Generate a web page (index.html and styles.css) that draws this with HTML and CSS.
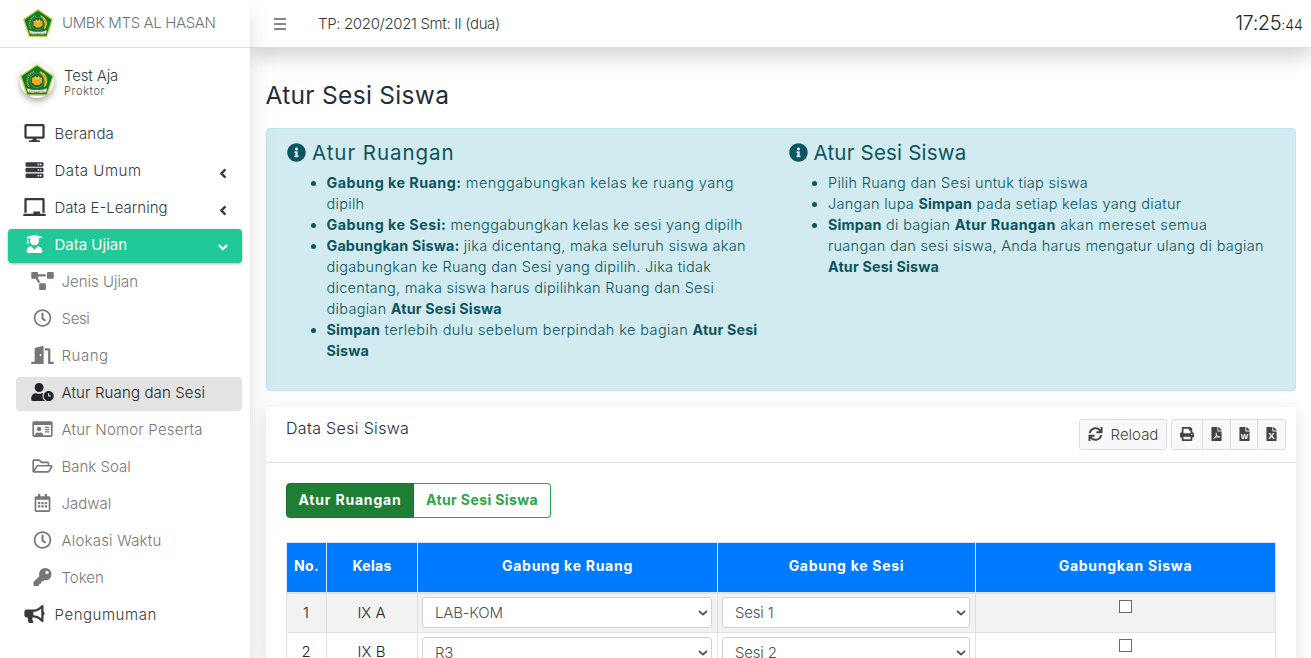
FILE: index.html
```
<!DOCTYPE html>
<html lang="id">
<head>
<meta charset="utf-8">
<title>Atur Sesi Siswa</title>
<link rel="stylesheet" href="styles.css">
</head>
<body>
<svg class="defs" aria-hidden="true">
  <symbol id="logo" viewBox="0 0 60 56">
    <path d="M30 1.500L58.500 21 47.500 54.500H12.500L1.500 21z" fill="#0b7a30" stroke="#c9cf3c" stroke-width="2.500" stroke-linejoin="round"/>
    <path d="M25 13.500a17 17 0 0 0-9 26" fill="none" stroke="#b9b93a" stroke-width="3.500" stroke-dasharray="1.800 1.600"/>
    <path d="M35 13.500a16 16 0 0 1 8 26q5-14-8-26z" fill="#dfb52e" stroke="#dfb52e" stroke-width="2"/>
    <circle cx="30" cy="29" r="12.500" fill="#0d6d30" stroke="#7fa63a" stroke-width="1"/>
    <path d="M21 24q5-2 9 1 4-3 9-1v9q-3 1-5 4h-8q-2-3-5-4z" fill="#f0a928"/>
    <path d="M26 20l4 4 4-4v5l-4 3-4-3z" fill="#f6d24a"/>
    <path d="M12 42q9 5 18 3 9 2 18-3l-1.500 7q-8 3-16.500 1-8.500 2-16.500-1z" fill="#f4f5ea" stroke="#5a6b50" stroke-width=".8"/>
    <path d="M16 47.500q7 2 14 .5 7 1.500 14-.5" fill="none" stroke="#68755f" stroke-width="1.500" stroke-dasharray="2 1"/>
  </symbol>
  <symbol id="desktop" viewBox="0 0 576 512"><path d="M528 0H48C21.500 0 0 21.500 0 48v320c0 26.500 21.500 48 48 48h192l-16 48h-72c-13.300 0-24 10.700-24 24s10.700 24 24 24h272c13.300 0 24-10.700 24-24s-10.700-24-24-24h-72l-16-48h192c26.500 0 48-21.500 48-48V48c0-26.500-21.500-48-48-48zm-16 352H64V64h448v288z"/></symbol>
  <symbol id="server" viewBox="0 0 512 512"><path fill-rule="evenodd" d="M480 160H32c-17.700 0-32-14.300-32-32V64c0-17.700 14.300-32 32-32h448c17.700 0 32 14.300 32 32v64c0 17.700-14.300 32-32 32zm-48-88a24 24 0 1 0 0 48 24 24 0 0 0 0-48zm-64 0a24 24 0 1 0 0 48 24 24 0 0 0 0-48zm112 248H32c-17.700 0-32-14.300-32-32v-64c0-17.700 14.300-32 32-32h448c17.700 0 32 14.300 32 32v64c0 17.700-14.300 32-32 32zm-48-88a24 24 0 1 0 0 48 24 24 0 0 0 0-48zm-64 0a24 24 0 1 0 0 48 24 24 0 0 0 0-48zm112 248H32c-17.700 0-32-14.300-32-32v-64c0-17.700 14.300-32 32-32h448c17.700 0 32 14.300 32 32v64c0 17.700-14.300 32-32 32zm-48-88a24 24 0 1 0 0 48 24 24 0 0 0 0-48zm-64 0a24 24 0 1 0 0 48 24 24 0 0 0 0-48z"/></symbol>
  <symbol id="chalkboard" viewBox="0 0 640 512"><path d="M96 64h448v352h64V40c0-22.060-17.940-40-40-40H72C49.940 0 32 17.940 32 40v376h64V64zm528 384H480v-64H288v64H16c-8.840 0-16 7.160-16 16v32c0 8.840 7.160 16 16 16h608c8.840 0 16-7.160 16-16v-32c0-8.840-7.160-16-16-16z"/></symbol>
  <symbol id="graduate" viewBox="0 0 448 512"><path d="M319.4 320.6L224 416l-95.4-95.4C57.1 323.7 0 382.2 0 454.4v9.6c0 26.500 21.500 48 48 48h352c26.500 0 48-21.500 48-48v-9.600c0-72.200-57.100-130.700-128.600-133.800zM13.6 79.800l6.400 1.500v58.400c-7 4.200-12 11.500-12 20.300 0 8.400 4.600 15.400 11.100 19.700L3.500 242c-1.700 6.900 2.100 14 7.600 14h41.800c5.500 0 9.300-7.100 7.600-14l-15.600-62.300C51.4 175.400 56 168.400 56 160c0-8.800-5-16.100-12-20.300V87.100l66 15.900c-8.600 17.200-14 36.400-14 57 0 70.700 57.300 128 128 128s128-57.300 128-128c0-20.600-5.300-39.800-14-57l96.300-23.200c18.200-4.400 18.200-27.100 0-31.500l-190.400-46c-13-3.100-26.700-3.100-39.700 0L13.600 48.200c-18.100 4.400-18.100 27.200 0 31.600z"/></symbol>
  <symbol id="diagram" viewBox="0 0 640 512"><path d="M384 320H256c-17.670 0-32 14.330-32 32v128c0 17.670 14.330 32 32 32h128c17.670 0 32-14.330 32-32V352c0-17.670-14.330-32-32-32zM192 32c0-17.670-14.330-32-32-32H32C14.330 0 0 14.330 0 32v128c0 17.670 14.330 32 32 32h95.720l73.160 128.040C211.980 300.980 232.400 288 256 288h.28L192 175.510V128h224V64H192V32zM608 0H480c-17.670 0-32 14.330-32 32v128c0 17.670 14.330 32 32 32h128c17.670 0 32-14.330 32-32V32c0-17.670-14.330-32-32-32z"/></symbol>
  <symbol id="clock" viewBox="0 0 512 512"><path d="M256 8C119 8 8 119 8 256s111 248 248 248 248-111 248-248S393 8 256 8zm0 448c-110.500 0-200-89.500-200-200S145.500 56 256 56s200 89.500 200 200-89.500 200-200 200zm61.800-104.400l-84.900-61.700c-3.100-2.300-4.900-5.900-4.900-9.700V116c0-6.600 5.400-12 12-12h32c6.600 0 12 5.400 12 12v141.700l66.800 48.600c5.400 3.900 6.500 11.400 2.600 16.800L334.600 349c-3.900 5.300-11.400 6.500-16.800 2.600z"/></symbol>
  <symbol id="door" viewBox="0 0 640 512"><path d="M624 448h-80V113.450C544 86.190 522.470 64 496 64H384v64h96v384h144c8.840 0 16-7.160 16-16v-32c0-8.840-7.160-16-16-16zM312.240 1.010l-192 49.740C105.990 54.440 96 67.700 96 82.920V448H16c-8.840 0-16 7.160-16 16v32c0 8.840 7.160 16 16 16h336V33.180c0-21.580-19.560-37.410-39.760-32.170zM264 288c-13.250 0-24-14.330-24-32s10.750-32 24-32 24 14.330 24 32-10.750 32-24 32z"/></symbol>
  <symbol id="userclock" viewBox="0 0 640 512"><path d="M496 224c-79.600 0-144 64.400-144 144s64.400 144 144 144 144-64.400 144-144-64.400-144-144-144zm64 150.300c0 5.300-4.400 9.700-9.700 9.700h-60.600c-5.300 0-9.700-4.400-9.700-9.700v-76.600c0-5.300 4.400-9.700 9.700-9.700h12.600c5.300 0 9.700 4.400 9.700 9.700V352h38.300c5.300 0 9.700 4.400 9.700 9.700v12.600zM320 368c0-27.800 6.700-54.100 18.200-77.500-8-1.500-16.200-2.500-24.600-2.500h-16.700c-22.200 10.200-46.900 16-72.900 16s-50.600-5.800-72.900-16h-16.700C60.200 288 0 348.200 0 422.400V464c0 26.500 21.500 48 48 48h347.100c-45.300-31.900-75.100-84.500-75.100-144zm-96-112c70.700 0 128-57.300 128-128S294.700 0 224 0 96 57.300 96 128s57.300 128 128 128z"/></symbol>
  <symbol id="idcard" viewBox="0 0 576 512"><path d="M528 32H48C21.500 32 0 53.500 0 80v352c0 26.500 21.500 48 48 48h480c26.500 0 48-21.500 48-48V80c0-26.500-21.500-48-48-48zm0 400H303.200c.9-4.500.8 3.600.8-22.400 0-31.800-30.100-57.600-67.200-57.600-10.800 0-18.700 8-44.800 8-26.900 0-33.400-8-44.800-8-37.100 0-67.200 25.800-67.200 57.600 0 26-.2 17.900.8 22.400H48V144h480v288zm-168-80h112c4.400 0 8-3.600 8-8v-16c0-4.400-3.600-8-8-8H360c-4.400 0-8 3.600-8 8v16c0 4.400 3.600 8 8 8zm0-64h112c4.400 0 8-3.600 8-8v-16c0-4.400-3.600-8-8-8H360c-4.400 0-8 3.600-8 8v16c0 4.400 3.600 8 8 8zm0-64h112c4.400 0 8-3.600 8-8v-16c0-4.400-3.600-8-8-8H360c-4.400 0-8 3.600-8 8v16c0 4.400 3.600 8 8 8zm-168 96c35.300 0 64-28.700 64-64s-28.700-64-64-64-64 28.700-64 64 28.700 64 64 64z"/></symbol>
  <symbol id="folder" viewBox="0 0 576 512"><path d="M527.9 224H480v-48c0-26.500-21.500-48-48-48H272l-64-64H48C21.500 64 0 85.500 0 112v288c0 26.500 21.500 48 48 48h400c16.500 0 31.900-8.500 40.700-22.600l79.900-128c20-31.900-3-73.400-40.700-73.400zM48 118c0-3.300 2.700-6 6-6h134.100l64 64H426c3.300 0 6 2.700 6 6v42H152c-16.800 0-32.400 8.800-41.100 23.200L48 351.400zm400 282H72l77.200-128H528z"/></symbol>
  <symbol id="calendar" viewBox="0 0 448 512"><path d="M400 64h-48V12c0-6.600-5.400-12-12-12h-40c-6.600 0-12 5.400-12 12v52H160V12c0-6.600-5.400-12-12-12h-40c-6.600 0-12 5.400-12 12v52H48C21.500 64 0 85.500 0 112v352c0 26.500 21.500 48 48 48h352c26.500 0 48-21.500 48-48V112c0-26.500-21.500-48-48-48zm0 394c0 3.300-2.700 6-6 6H54c-3.300 0-6-2.700-6-6V160h352z"/><path d="M96 224h64v64H96zm96 0h64v64h-64zm96 0h64v64h-64zM96 320h64v64H96zm96 0h64v64h-64zm96 0h64v64h-64z"/></symbol>
  <symbol id="key" viewBox="0 0 512 512"><path d="M512 176c0 97.200-78.800 176-176 176-11.220 0-22.190-1.060-32.830-3.070l-24.010 27.010A24 24 0 0 1 261.220 384H224v40c0 13.250-10.750 24-24 24h-40v40c0 13.250-10.750 24-24 24H24c-13.250 0-24-10.750-24-24v-78.060c0-6.360 2.530-12.470 7.030-16.970l161.800-161.800C163.110 213.810 160 195.270 160 176 160 78.800 238.800 0 336 0s176 78.500 176 176zM336 128c0 26.510 21.490 48 48 48s48-21.490 48-48-21.490-48-48-48-48 21.490-48 48z"/></symbol>
  <symbol id="bullhorn" viewBox="0 0 576 512"><path d="M576 240c0-23.630-12.950-44.040-32-55.120V32.010C544 23.260 537.020 0 512 0c-7.120 0-14.190 2.380-19.980 7.020l-85.030 68.030C364.280 109.190 310.660 128 256 128H64c-35.350 0-64 28.650-64 64v96c0 35.350 28.650 64 64 64h33.700c-1.390 10.480-2.180 21.140-2.180 32 0 39.770 9.260 77.350 25.560 110.940 5.190 10.690 16.520 17.060 28.400 17.060h74.280c26.050 0 41.690-29.840 25.900-50.560-16.400-21.520-26.150-48.360-26.150-77.440 0-11.110 1.620-21.790 4.410-32H256c54.660 0 108.280 18.810 150.980 52.950l85.030 68.030a32 32 0 0 0 19.980 7.020c24.920 0 32-22.780 32-32V295.130C563.050 284.040 576 263.630 576 240zm-96 141.420l-33.050-26.440C392.950 311.780 325.120 288 256 288v-96c69.120 0 136.950-23.780 190.950-66.980L480 98.580v282.840z"/></symbol>
  <symbol id="angle" viewBox="0 0 256 512"><path d="M31.700 239l136-136c9.400-9.400 24.600-9.400 33.900 0l22.600 22.600c9.400 9.400 9.400 24.600 0 33.900L127.900 256l96.400 96.400c9.400 9.400 9.400 24.600 0 33.900L201.700 409c-9.400 9.400-24.600 9.400-33.900 0l-136-136c-9.500-9.400-9.500-24.600-.1-34z"/></symbol>
  <symbol id="info" viewBox="0 0 512 512"><path d="M256 8C119.040 8 8 119.080 8 256c0 137 111.040 248 248 248s248-111 248-248C504 119.080 392.960 8 256 8zm0 110c23.200 0 42 18.800 42 42s-18.800 42-42 42-42-18.800-42-42 18.800-42 42-42zm56 254c0 6.630-5.370 12-12 12h-88c-6.630 0-12-5.370-12-12v-24c0-6.630 5.370-12 12-12h12v-64h-12c-6.630 0-12-5.370-12-12v-24c0-6.630 5.370-12 12-12h64c6.630 0 12 5.370 12 12v100h12c6.630 0 12 5.370 12 12v24z"/></symbol>
  <symbol id="sync" viewBox="0 0 512 512"><path d="M440.650 12.570l4 82.770A247.160 247.160 0 0 0 255.830 8C134.730 8 33.910 94.920 12.290 209.820A12 12 0 0 0 24.090 224h49.050a12 12 0 0 0 11.670-9.260 175.910 175.910 0 0 1 317-56.940l-101.460-4.860a12 12 0 0 0-12.570 12v47.410a12 12 0 0 0 12 12H500a12 12 0 0 0 12-12V12a12 12 0 0 0-12-12h-47.370a12 12 0 0 0-11.980 12.570zM255.830 432a175.610 175.610 0 0 1-146-77.800l101.800 4.870a12 12 0 0 0 12.570-12v-47.400a12 12 0 0 0-12-12H12a12 12 0 0 0-12 12V500a12 12 0 0 0 12 12h47.350a12 12 0 0 0 12-12.600l-4.150-82.570A247.170 247.170 0 0 0 255.830 504c121.110 0 221.930-86.920 243.550-201.820a12 12 0 0 0-11.800-14.180h-49.050a12 12 0 0 0-11.670 9.260A175.860 175.860 0 0 1 255.830 432z"/></symbol>
  <symbol id="print" viewBox="0 0 512 512"><path d="M448 192V77.250c0-8.490-3.370-16.620-9.370-22.630L393.370 9.370c-6-6-14.140-9.370-22.630-9.370H96C78.330 0 64 14.330 64 32v160c-35.350 0-64 28.650-64 64v112c0 8.840 7.160 16 16 16h48v96c0 17.670 14.330 32 32 32h320c17.670 0 32-14.330 32-32v-96h48c8.840 0 16-7.160 16-16V256c0-35.350-28.650-64-64-64zm-64 256H128v-96h256v96zm0-224H128V64h192v48c0 8.840 7.160 16 16 16h48v96zm48 72c-13.250 0-24-10.750-24-24 0-13.260 10.750-24 24-24s24 10.740 24 24c0 13.250-10.750 24-24 24z"/></symbol>
  <symbol id="file" viewBox="0 0 384 512"><path d="M224 136V0H24C10.700 0 0 10.700 0 24v464c0 13.300 10.700 24 24 24h336c13.300 0 24-10.700 24-24V160H248c-13.300 0-24-10.700-24-24zM377 105L279.100 7c-4.500-4.500-10.600-7-17-7H256v128h128v-6.100c0-6.300-2.500-12.400-7-16.900z"/></symbol>
  <symbol id="chevron" viewBox="0 0 10 6"><path d="M1 1l4 3.500L9 1" fill="none" stroke="#555" stroke-width="1.700"/></symbol>
</svg>

<div class="app">
  <aside class="sidebar">
    <a class="brand"><svg class="brand-logo"><use href="#logo"/></svg><span>UMBK MTS AL HASAN</span></a>
    <div class="user">
      <span class="avatar"><svg><use href="#logo"/></svg></span>
      <span class="user-text"><span class="user-name">Test Aja</span><span class="user-role">Proktor</span></span>
    </div>
    <nav class="menu">
      <a class="item"><svg><use href="#desktop"/></svg><span class="sp-2">Beranda</span></a>
      <a class="item"><svg><use href="#server"/></svg><span class="sp-5">Data Umum</span><svg class="angle"><use href="#angle"/></svg></a>
      <a class="item"><svg><use href="#chalkboard"/></svg><span>Data E-Learning</span><svg class="angle"><use href="#angle"/></svg></a>
      <a class="item active"><svg><use href="#graduate"/></svg><span>Data Ujian</span><svg class="angle"><use href="#angle"/></svg></a>
      <a class="item sub"><svg><use href="#diagram"/></svg><span>Jenis Ujian</span></a>
      <a class="item sub"><svg><use href="#clock"/></svg><span class="sp-neg">Sesi</span></a>
      <a class="item sub"><svg><use href="#door"/></svg><span class="sp-5">Ruang</span></a>
      <a class="item sub current"><svg><use href="#userclock"/></svg><span class="sp-1">Atur Ruang dan Sesi</span></a>
      <a class="item sub"><svg><use href="#idcard"/></svg><span class="sp-2">Atur Nomor Peserta</span></a>
      <a class="item sub"><svg><use href="#folder"/></svg><span>Bank Soal</span></a>
      <a class="item sub"><svg><use href="#calendar"/></svg><span>Jadwal</span></a>
      <a class="item sub"><svg><use href="#clock"/></svg><span class="sp-2">Alokasi Waktu</span></a>
      <a class="item sub"><svg><use href="#key"/></svg><span>Token</span></a>
      <a class="item"><svg><use href="#bullhorn"/></svg><span class="sp-5">Pengumuman</span></a>
    </nav>
  </aside>

  <div class="main">
    <header class="navbar">
      <span class="bars"><i></i><i></i><i></i></span>
      <span class="period">TP: 2020/2021 Smt: II (dua)</span>
      <span class="time">17:25<small>:44</small></span>
    </header>
    <main class="content">
      <h1>Atur Sesi Siswa</h1>
      <section class="notice">
        <div class="notice-col">
          <h2><svg><use href="#info"/></svg><span class="sp-title">Atur Ruangan</span></h2>
          <ul>
            <li><b class="wide">Gabung ke Ruang:</b> <span class="wide">menggabungkan kelas ke ruang yang</span><br>dipilh</li>
            <li><b class="wide">Gabung ke Sesi:</b> menggabungkan kelas ke sesi yang dipilh</li>
            <li><b>Gabungkan Siswa:</b> jika dicentang, maka seluruh siswa akan<br>digabungkan ke Ruang dan Sesi yang dipilih. Jika tidak<br>dicentang, maka siswa harus dipilihkan Ruang dan Sesi<br>dibagian <b>Atur Sesi Siswa</b></li>
            <li><b>Simpan</b> <span class="mid">terlebih dulu sebelum berpindah ke bagian</span> <b>Atur Sesi<br>Siswa</b></li>
          </ul>
        </div>
        <div class="notice-col">
          <h2><svg><use href="#info"/></svg><span>Atur Sesi Siswa</span></h2>
          <ul>
            <li>Pilih Ruang dan Sesi untuk tiap siswa</li>
            <li>Jangan lupa <b>Simpan</b> pada setiap kelas yang diatur</li>
            <li><b>Simpan</b> di bagian <b class="wide">Atur Ruangan</b> <span class="mid">akan mereset semua</span><br>ruangan dan sesi siswa, Anda harus mengatur ulang di bagian<br><b>Atur Sesi Siswa</b></li>
          </ul>
        </div>
      </section>

      <section class="card">
        <div class="card-head">
          <h3>Data Sesi Siswa</h3>
          <div class="tools">
            <button class="tool reload"><svg><use href="#sync"/></svg>Reload</button>
            <div class="tool-group">
              <button class="tool"><svg><use href="#print"/></svg></button>
              <button class="tool"><svg viewBox="0 0 384 512"><use href="#file"/><path class="pdf-mark" d="M176 210C200 300 190 340 90 430M185 285C220 360 250 370 310 370M120 390C180 360 230 350 310 360"/></svg></button>
              <button class="tool"><svg viewBox="0 0 384 512"><use href="#file"/><text class="file-mark" x="192" y="425">W</text></svg></button>
              <button class="tool"><svg viewBox="0 0 384 512"><use href="#file"/><text class="file-mark large" x="192" y="445">X</text></svg></button>
            </div>
          </div>
        </div>
        <div class="card-body">
          <div class="tabs"><button class="tab on">Atur Ruangan</button><button class="tab">Atur Sesi Siswa</button></div>
          <table>
            <colgroup><col class="c-no"><col class="c-class"><col class="c-room"><col class="c-session"><col class="c-merge"></colgroup>
            <thead><tr><th>No.</th><th>Kelas</th><th>Gabung ke Ruang</th><th>Gabung ke Sesi</th><th>Gabungkan Siswa</th></tr></thead>
            <tbody>
              <tr><td>1</td><td>IX A</td><td class="field"><div class="select"><select><option>LAB-KOM</option></select><svg><use href="#chevron"/></svg></div></td><td class="field"><div class="select"><select><option>Sesi 1</option></select><svg><use href="#chevron"/></svg></div></td><td class="check"><input type="checkbox"></td></tr>
              <tr><td>2</td><td>IX B</td><td class="field"><div class="select"><select><option>R3</option></select><svg><use href="#chevron"/></svg></div></td><td class="field"><div class="select"><select><option>Sesi 2</option></select><svg><use href="#chevron"/></svg></div></td><td class="check"><input type="checkbox"></td></tr>
            </tbody>
          </table>
        </div>
      </section>
    </main>
  </div>
</div>
</body>
</html>
```
FILE: styles.css
```
* { box-sizing: border-box; }
html, body { height: 100%; }
body { margin: 0; overflow: hidden; font: 300 15px/1.5 Inter, "Liberation Sans", sans-serif; color: #212529; background: #fff; }
svg { fill: currentColor; flex: none; }
.defs { position: absolute; width: 0; height: 0; }
h1, h2, h3, ul { margin: 0; }
button, select { font-family: inherit; }

.app { display: flex; height: 658px; overflow: hidden; }

/* Sidebar */
.sidebar { width: 250px; flex: none; background: #fff; color: #343a40; z-index: 2; box-shadow: 0 14px 28px rgba(0,0,0,.09), 0 10px 10px rgba(0,0,0,.05); clip-path: inset(0 -30px 0 0); }
.brand { display: flex; align-items: center; height: 48px; padding: 0 0 1px 23px; border-bottom: 1px solid #dee2e6; color: #6c757d; letter-spacing: -.37px; }
.brand-logo { width: 30px; height: 28px; margin: -1px 9px 0 0; }
.user { display: flex; align-items: flex-start; height: 70px; padding: 16px 0 0 20px; }
.avatar { width: 34px; height: 34px; border-radius: 50%; display: flex; align-items: center; justify-content: center; box-shadow: 0 3px 6px rgba(0,0,0,.35); margin-right: 10px; }
.avatar svg { width: 34px; height: 32px; flex: none; margin-top: -3px; }
.user-text { display: flex; flex-direction: column; padding-top: 3px; }
.user-name { line-height: 18px; letter-spacing: -.15px; }
.user-role { font-size: 11px; line-height: 13px; letter-spacing: .65px; color: #495057; }
.menu { display: flex; flex-direction: column; gap: 3px; padding: 0 8px; }
.item { display: flex; align-items: center; height: 34px; padding: 0 13px 1px 15px; border-radius: 4px; }
.item > svg:first-child { width: 23px; height: 18px; margin-right: 8.500px; margin-top: -4px; }
.item .angle { width: 8px; height: 15px; margin: 4px 2px 0 auto; }
.item.active { background: #20c997; color: #fff; font-weight: 400; box-shadow: 0 1px 3px rgba(0,0,0,.3); }
.item.active .angle { transform: rotate(-90deg); margin-top: 4px; }
.item.sub { margin-left: 8px; color: #777; padding-left: 15px; }
.item.sub > svg:first-child { margin-right: 7.500px; }
.item.current { background: #e3e3e3; color: #212529; }
.sp-neg { letter-spacing: -.35px; }
.sp-1 { letter-spacing: .13px; }
.sp-2 { letter-spacing: .2px; }
.sp-5 { letter-spacing: .55px; }

/* Top bar */
.main { flex: 1; min-width: 0; display: flex; flex-direction: column; }
.navbar { display: flex; align-items: center; flex: none; height: 48px; padding: 0 8px 0 24px; background: #fff; border-bottom: 1px solid #dee2e6; box-shadow: 0 8px 20px rgba(0,0,0,.19); z-index: 1; }
.bars { display: flex; flex-direction: column; gap: 3px; width: 12px; margin: 1px 32px 0 0; }
.bars i { height: 2px; background: #858585; border-radius: .5px; }
.period { letter-spacing: -.35px; color: #343a40; padding-top: 1px; }
.time { margin-left: auto; font-size: 20px; letter-spacing: -.45px; padding-bottom: 2px; }
.time small { font-size: 14px; letter-spacing: .1px; }

/* Content */
.content { padding: 32px 15px 0 16px; }
h1 { font-weight: 400; font-size: 24.5px; line-height: 30px; letter-spacing: .3px; margin-left: -.5px; color: #1f2d3d; }
.notice { display: flex; margin-top: 18px; height: 263px; padding: 12px 20px; border: 1px solid #bee5eb; border-radius: 4px; background: #d1ebf0; color: #0c5460; }
.notice-col { width: 501.500px; flex: none; }
.notice-col + .notice-col { width: 487px; }
h2 { display: flex; align-items: center; gap: 6px; font-weight: 400; font-size: 20.5px; line-height: 24px; letter-spacing: .2px; margin-bottom: 7px; }
h2 svg { width: 19px; height: 19px; margin-top: -1px; }
.sp-title { letter-spacing: .95px; }
ul { padding-left: 39.500px; font-size: 14.5px; line-height: 21px; letter-spacing: .3px; white-space: nowrap; }
li b { font-weight: 700; letter-spacing: .17px; font-size: 14.3px; }
li .wide { letter-spacing: .47px; }
li .mid { letter-spacing: .4px; }

.card { margin-top: 16px; background: #fff; border-radius: 4px; box-shadow: 0 5px 20px rgba(0,0,0,.13); }
.card-head { display: flex; justify-content: space-between; height: 56px; padding: 12px 10px 0 20px; border-bottom: 1px solid #dee2e6; }
h3 { font-weight: 300; font-size: 16px; line-height: 18px; letter-spacing: .33px; color: #1f2d3d; }
.tools { display: flex; gap: 4px; }
.tool { display: flex; align-items: center; justify-content: center; height: 31px; width: 28px; padding: 0 0 1px; border: 1px solid #ddd; background: #f8f9fa; color: #444; font-size: 15px; font-weight: 300; }
.tool svg { width: 11px; height: 14px; }
.reload { width: 88px; border-radius: 3px; }
.reload svg { width: 15px; height: 14px; margin-right: 8px; }
.tool-group { display: flex; }
.tool-group .tool + .tool { margin-left: -1px; width: 29px; }
.tool-group .tool:first-child { width: 32px; border-radius: 3px 0 0 3px; }
.tool-group .tool:first-child svg { width: 14px; }
.tool-group .tool:nth-child(3) { width: 28px; }
.tool-group .tool:last-child { width: 29px; border-radius: 0 3px 3px 0; }
.pdf-mark { fill: none; stroke: #fff; stroke-width: 36; }
.file-mark { fill: #fff; font: 700 290px "Liberation Sans", sans-serif; text-anchor: middle; }
.file-mark.large { font-size: 350px; }

.card-body { padding: 20px 20px 0; }
.tabs { display: flex; }
.tab { width: 137px; height: 35px; padding: 0 0 2px; border: 1px solid #28a745; border-left: 0; border-radius: 0 4px 4px 0; background: #fff; color: #28a745; font-size: 14px; font-weight: 700; letter-spacing: .4px; }
.tab.on { width: 128px; background: #1e7e34; border: 1px solid #1c7430; color: #fff; border-radius: 4px 0 0 4px; letter-spacing: .8px; }

table { width: 990px; margin-top: 24px; border-collapse: collapse; table-layout: fixed; }
.c-no { width: 40px; } .c-class { width: 91px; } .c-room { width: 300px; } .c-session { width: 258px; }
th, td { border: 1px solid #dee2e6; padding: 0; text-align: center; }
th { height: 50px; border-bottom-width: 2px; background: #007bff; color: #fff; font-size: 14px; font-weight: 700; letter-spacing: .72px; padding-bottom: 3px; }
th:first-child, th:nth-child(2) { letter-spacing: .3px; }
td { height: 40px; }
td:nth-child(1), td:nth-child(2) { padding-right: 1px; }
tbody tr:first-child td { background: #f2f2f2; }
.field { padding: 0 5px 0 4px; vertical-align: middle; }
.select { display: grid; align-items: center; }
.select > * { grid-area: 1 / 1; }
.select svg { width: 10px; height: 6px; justify-self: end; margin-right: 4px; pointer-events: none; }
select { appearance: none; display: block; width: 100%; height: 31px; padding: 0 0 1px 12px; border: 1px solid #ced4da; border-radius: 3px; background: #fff; color: #495057; font-size: 15px; font-weight: 300; letter-spacing: -.2px; }
.check { vertical-align: top; }
.check input { appearance: none; display: block; margin: 6px auto 0; width: 13px; height: 13px; border: 1px solid #6b6b6b; background: #fff; }
```
